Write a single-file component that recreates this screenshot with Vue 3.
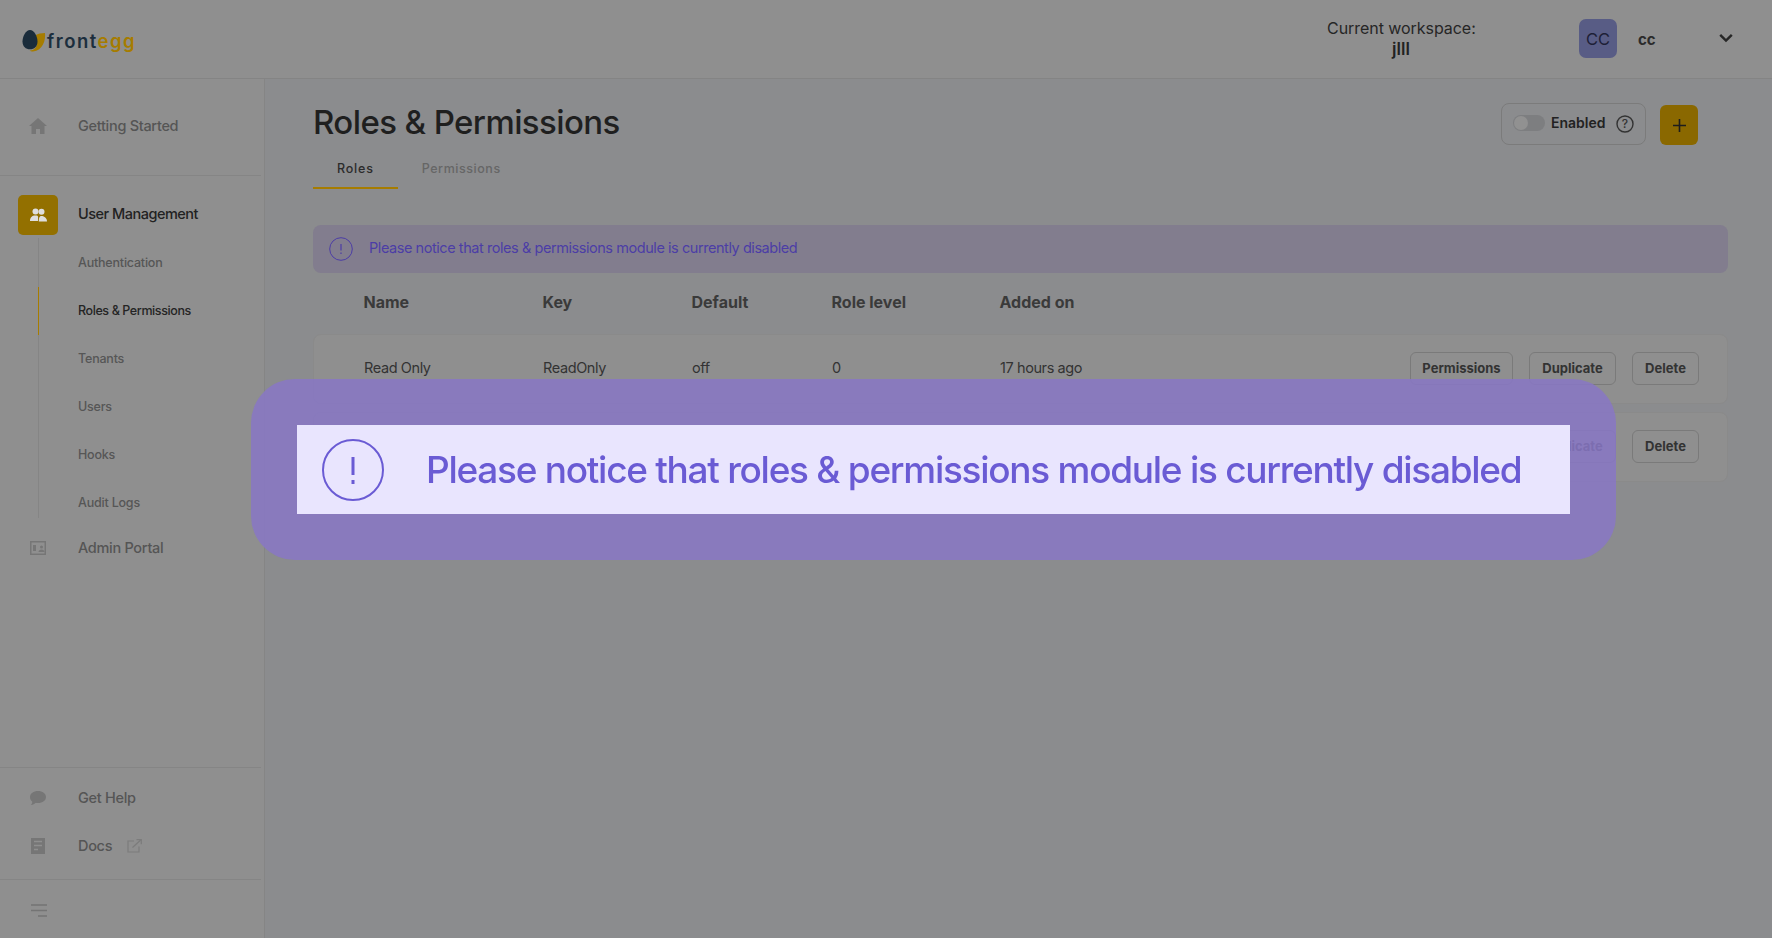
<script setup>
const subItems = [
  { label: 'Authentication' },
  { label: 'Roles & Permissions', active: true },
  { label: 'Tenants' },
  { label: 'Users' },
  { label: 'Hooks' },
  { label: 'Audit Logs' },
]
const columns = ['Name', 'Key', 'Default', 'Role level', 'Added on']
const rows = [
  { id: 'read-only', cells: ['Read Only', 'ReadOnly', 'off', '0', '17 hours ago'] },
  { id: 'covered', cells: [] },
]
const notice = 'Please notice that roles & permissions module is currently disabled'
</script>

<template>
  <div class="page">
    <header class="topbar">
      <div class="logo">
        <svg class="egg" width="24" height="22" viewBox="0 0 24 22">
          <path d="M13 5.500c3.500-2 6-2.200 10-2.500c.8 7-2 17.500-12 18.500c-1.500 0-3-.5-3.500-1c5 .2 9-4 7-12z" fill="#a67c00" />
          <path d="M8 0c4 0 7.500 6 7.500 11.500c0 5-3.300 7.800-7.500 7.800S.5 16.500.5 11.500C.5 6 4 0 8 0z" fill="#1a2c3b" />
        </svg>
        <span class="logo-text">front<span class="logo-accent">egg</span></span>
      </div>
      <div class="workspace">
        <div class="workspace-label">Current workspace:</div>
        <div class="workspace-name">jlll</div>
      </div>
      <div class="avatar">CC</div>
      <div class="user-name">cc</div>
      <svg class="chevron" width="14" height="10" viewBox="0 0 14 10">
        <path d="M1.200 1.800L7 7.600l5.800-5.800" fill="none" stroke="#262626" stroke-width="2.400" />
      </svg>
    </header>

    <div class="body">
      <aside class="sidebar">
        <div class="section-top">
          <a class="nav-item">
            <span class="nav-icon">
              <svg width="18" height="16" viewBox="0 0 18 16"><path d="M9 0L0 8h2.500v8h4.500v-5h4v5h4.500V8H18z" fill="#767676" /></svg>
            </span>
            <span class="nav-label">Getting Started</span>
          </a>
        </div>

        <div class="section-main">
          <a class="nav-item current">
            <span class="nav-icon boxed">
              <svg width="17" height="14" viewBox="0 0 17 14">
                <circle cx="5.500" cy="3.500" r="3" fill="#dedede" />
                <path d="M0 13c0-3.500 2-5.500 5.500-5.500S8 9 8 13z" fill="#dedede" />
                <circle cx="11.500" cy="3.800" r="3" fill="#dedede" />
                <path d="M8.800 13.500c0-4 .8-5.500 2.700-5.500S17 9.500 17 13.500z" fill="#dedede" />
              </svg>
            </span>
            <span class="nav-label">User Management</span>
          </a>
          <div class="sub-list">
            <a v-for="item in subItems" :key="item.label" class="sub-item" :class="{ active: item.active }">{{ item.label }}</a>
          </div>
          <a class="nav-item portal">
            <span class="nav-icon">
              <svg width="16" height="14" viewBox="0 0 16 14">
                <rect x="0.750" y="0.750" width="14.500" height="12.500" fill="none" stroke="#767676" stroke-width="1.500" />
                <rect x="3" y="4" width="3" height="6" fill="#767676" />
                <circle cx="11.500" cy="6" r="1.500" fill="#767676" />
                <path d="M8.500 11c0-1.500 1.500-2.500 3-2.500s3 1 3 2.500z" fill="#767676" />
              </svg>
            </span>
            <span class="nav-label">Admin Portal</span>
          </a>
        </div>

        <div class="section-bottom">
          <a class="nav-item">
            <span class="nav-icon">
              <svg width="16" height="14" viewBox="0 0 16 14"><path d="M8 0c4.400 0 8 2.500 8 6s-3.600 6-8 6c-.8 0-1.500 0-2.200-.2C4.700 13 3 14 .8 14c1-1 1.500-2 1.500-3.200C.9 9.700 0 8 0 6c0-3.500 3.600-6 8-6z" fill="#767676" /></svg>
            </span>
            <span class="nav-label">Get Help</span>
          </a>
          <a class="nav-item">
            <span class="nav-icon">
              <svg width="14" height="16" viewBox="0 0 14 16">
                <path d="M0 0h14v16H0z" fill="#767676" />
                <path d="M3 3.500h8M3 7.500h8M3 11.500h4" stroke="#8f8f8f" stroke-width="1.600" />
              </svg>
            </span>
            <span class="nav-label">Docs</span>
            <svg class="external" width="15" height="14" viewBox="0 0 15 14">
              <path d="M7 2H1v11h11V7.500" fill="none" stroke="#7c7c7c" stroke-width="1.200" />
              <path d="M5.500 8.500L14 .8M9.500.7h4.800v4.500" fill="none" stroke="#7c7c7c" stroke-width="1.200" />
            </svg>
          </a>
        </div>

        <div class="section-foot">
          <svg width="16" height="13" viewBox="0 0 16 13">
            <path d="M0 1h16M0 6.500h16M7 12h9" stroke="#747474" stroke-width="1.500" />
          </svg>
        </div>
      </aside>

      <main class="main">
        <div class="title-row">
          <h1 class="title">Roles &amp; Permissions</h1>
          <div class="controls">
            <div class="enable-box">
              <span class="toggle"><span class="knob"></span></span>
              <span class="enable-label">Enabled</span>
              <svg width="18" height="18" viewBox="0 0 18 18">
                <circle cx="9" cy="9" r="8" fill="none" stroke="#333" stroke-width="1.400" />
                <text x="9" y="13" text-anchor="middle" class="help-mark">?</text>
              </svg>
            </div>
            <button class="add-btn">
              <svg width="13" height="13" viewBox="0 0 13 13"><path d="M6.500 0v13M0 6.500h13" stroke="#1d1d1d" stroke-width="1.600" /></svg>
            </button>
          </div>
        </div>

        <nav class="tabs">
          <a class="tab selected">Roles</a>
          <a class="tab">Permissions</a>
        </nav>

        <div class="alert">
          <svg width="24" height="24" viewBox="0 0 24 24">
            <circle cx="12" cy="12" r="11.300" fill="none" stroke="#4c3da6" stroke-width="1" />
            <path d="M12 7v6.500M12 15.500v1.500" stroke="#4c3da6" stroke-width="1.200" />
          </svg>
          <span class="alert-text">{{ notice }}</span>
        </div>

        <div class="table-row table-head">
          <span v-for="col in columns" :key="col" class="cell">{{ col }}</span>
        </div>
        <div class="rows">
          <div v-for="row in rows" :key="row.id" class="table-row card">
            <span v-for="value in row.cells" :key="value" class="cell">{{ value }}</span>
            <div class="actions">
              <button class="act perm" :class="{ covered: row.id === 'covered' }">Permissions</button>
              <button class="act dup">Duplicate</button>
              <button class="act del">Delete</button>
            </div>
          </div>
        </div>
      </main>
    </div>

    <div class="spotlight">
      <div class="spotlight-inner">
        <svg class="big-icon" width="62" height="62" viewBox="0 0 62 62">
          <circle cx="31" cy="31" r="30" fill="none" stroke="#6a5bd4" stroke-width="2" />
          <path d="M31 18v18M31 41v4" stroke="#6a5bd4" stroke-width="3" />
        </svg>
        <span class="big-text">{{ notice }}</span>
      </div>
    </div>
  </div>
</template>

<style scoped>
.page {
  position: relative;
  display: flex;
  flex-direction: column;
  height: 938px;
  overflow: hidden;
  background: #8b8c8e;
  font-family: Inter, "Noto Sans", sans-serif;
  color: #222;
}
.topbar {
  display: flex;
  align-items: center;
  height: 78px;
  flex: none;
  padding: 0 39px 0 22px;
  background: #8f8f8f;
  border-bottom: 1px solid #848484;
}
.logo {
  display: flex;
  align-items: center;
  gap: 1px;
  margin-top: 3px;
}
.logo-text {
  font-size: 18.500px;
  font-weight: 600;
  letter-spacing: 1.500px;
  color: #1c2e3d;
  line-height: 22px;
}
.logo-accent {
  color: #a67c00;
}
.workspace {
  margin-left: auto;
  width: 148px;
  text-align: center;
  margin-top: -3px;
}
.workspace-label {
  font-size: 16px;
  line-height: 22px;
  color: #262626;
  white-space: nowrap;
  letter-spacing: -0.05px;
}
.workspace-name {
  font-size: 17px;
  font-weight: 600;
  line-height: 20px;
  color: #222;
}
.avatar {
  display: flex;
  align-items: center;
  justify-content: center;
  width: 38px;
  height: 39px;
  margin-left: 104px;
  margin-top: -1px;
  border-radius: 7px;
  background: #585c85;
  font-size: 16.500px;
  color: #1d2036;
}
.user-name {
  width: 81px;
  margin-left: 21px;
  font-size: 15px;
  font-weight: 700;
  color: #2b2b2b;
  margin-top: 1px;
}
.chevron {
  margin-top: -2px;
}

.body {
  display: flex;
  flex: 1;
  min-height: 0;
}
.sidebar {
  display: flex;
  flex-direction: column;
  width: 265px;
  flex: none;
  background: #8f8f8f;
  border-right: 1px solid #858585;
  box-sizing: border-box;
}
.section-top {
  display: flex;
  align-items: center;
  height: 94px;
  padding-bottom: 2px;
  margin-right: 3px;
  border-bottom: 1px solid #858585;
  box-sizing: content-box;
}
.nav-item {
  display: flex;
  align-items: center;
  height: 48px;
  padding-left: 18px;
  gap: 20px;
  color: #555;
  font-size: 14.500px;
  font-weight: 500;
  letter-spacing: -0.3px;
  white-space: nowrap;
}
.nav-label {
  padding-bottom: 2px;
}
.nav-icon {
  display: flex;
  align-items: center;
  justify-content: center;
  width: 40px;
  height: 40px;
  flex: none;
}
.boxed {
  background: #937000;
  border-radius: 5px;
}
.current {
  color: #222;
  letter-spacing: -0.5px;
}
.current .nav-label {
  padding-bottom: 4px;
}
.section-main {
  padding-top: 19px;
  display: flex;
  flex-direction: column;
}
.section-main .current {
  height: 40px;
  margin-bottom: 3px;
}
.sub-list {
  position: relative;
  margin-left: 38px;
  padding-left: 40px;
}
.sub-list::before {
  content: "";
  position: absolute;
  left: 0;
  top: 0;
  bottom: 8px;
  width: 1px;
  background: #858585;
}
.sub-item {
  position: relative;
  display: flex;
  align-items: center;
  height: 48px;
  font-size: 12.500px;
  font-weight: 500;
  color: #565656;
  letter-spacing: -0.2px;
}
.sub-item.active {
  color: #242424;
  letter-spacing: -0.4px;
}
.sub-item.active::before {
  content: "";
  position: absolute;
  left: -40px;
  top: 1px;
  bottom: -1px;
  width: 1px;
  background: #a67c00;
}
.portal {
  margin-top: -2px;
}
.section-bottom {
  margin-top: auto;
  margin-right: 3px;
  padding: 6px 0 9px;
  border-top: 1px solid #858585;
  border-bottom: 1px solid #858585;
}
.external {
  margin-left: -5px;
}
.section-foot {
  display: flex;
  align-items: center;
  height: 55px;
  padding: 3px 0 0 31px;
}

.main {
  flex: 1;
  min-width: 0;
  padding: 21px 44px 0 48px;
}
.title-row {
  display: flex;
  align-items: flex-start;
  justify-content: space-between;
}
.title {
  margin: 0;
  font-size: 33px;
  font-weight: 500;
  line-height: 44px;
  letter-spacing: -0.6px;
  color: #1f1f1f;
}
.controls {
  display: flex;
  align-items: flex-end;
  gap: 14px;
  margin: 3px 30px 0 0;
}
.enable-box {
  display: flex;
  align-items: center;
  box-sizing: border-box;
  width: 145px;
  height: 42px;
  padding: 0 11px;
  border: 1px solid #7b7b7b;
  border-radius: 8px;
  gap: 6px;
}
.toggle {
  display: block;
  width: 32px;
  height: 16px;
  margin-top: -2px;
  border-radius: 8px;
  background: #7d7e80;
  flex: none;
}
.knob {
  display: block;
  width: 14px;
  height: 14px;
  margin: 1px;
  border-radius: 50%;
  background: #919191;
}
.enable-label {
  font-size: 14px;
  font-weight: 600;
  color: #222;
  margin-right: 4px;
  padding-bottom: 3px;
}
.help-mark {
  font-size: 12px;
  font-weight: 500;
  fill: #333;
  font-family: Inter, sans-serif;
}
.add-btn {
  display: flex;
  align-items: center;
  justify-content: center;
  width: 38px;
  height: 40px;
  padding: 0;
  border: 0;
  border-radius: 6px;
  background: #8a6800;
}
.tabs {
  display: flex;
  margin-top: 16px;
  height: 28px;
}
.tab {
  box-sizing: border-box;
  height: 28px;
  padding: 0 24px;
  font-size: 12.500px;
  font-weight: 500;
  line-height: 16px;
  letter-spacing: 0.55px;
  color: #666;
}
.tab.selected {
  color: #2b2b2b;
  border-bottom: 2px solid #a67c00;
  letter-spacing: 0.8px;
}
.alert {
  display: flex;
  align-items: center;
  gap: 16px;
  height: 48px;
  margin-top: 36px;
  padding-left: 16px;
  border-radius: 8px;
  background: #827d8e;
  color: #4c3da6;
  font-size: 14.500px;
  letter-spacing: -0.44px;
}
.alert-text {
  padding-bottom: 3px;
}
.table-row {
  display: flex;
  align-items: center;
  padding-left: 50px;
}
.cell {
  flex: none;
  font-size: 14.500px;
  color: #333;
  letter-spacing: -0.4px;
  white-space: nowrap;
}
.cell:nth-child(1) { width: 179px; }
.cell:nth-child(2) { width: 149px; }
.cell:nth-child(3) { width: 140px; }
.cell:nth-child(4) { width: 168px; }
.table-head {
  height: 20px;
  margin-top: 20px;
  margin-bottom: 21px;
  padding-left: 50.500px;
}
.table-head .cell {
  font-size: 16px;
  font-weight: 700;
  color: #3a3a3a;
  letter-spacing: 0;
  padding-bottom: 2px;
}
.rows {
  display: flex;
  flex-direction: column;
  gap: 8px;
}
.card {
  height: 70px;
  box-sizing: border-box;
  background: #8f8f8f;
  border: 1px solid #8a8a8a;
  border-radius: 8px;
}
.card .cell {
  padding-bottom: 4px;
}
.actions {
  display: flex;
  gap: 16px;
  margin: -1px 28px 0 auto;
}
.act {
  height: 33px;
  padding: 0 0 2px;
  box-sizing: border-box;
  background: transparent;
  border: 1px solid #7a7a7a;
  border-radius: 6px;
  font-family: Inter, sans-serif;
  font-size: 13px;
  font-weight: 700;
  color: #333;
}
.perm { width: 103px; }
.covered { visibility: hidden; }
.dup { width: 87px; }
.del { width: 67px; }

.spotlight {
  position: absolute;
  left: 251px;
  top: 379px;
  display: flex;
  box-sizing: border-box;
  width: 1365px;
  height: 181px;
  padding: 46px;
  border-radius: 44px;
  background: rgba(136, 119, 197, 0.86);
}
.spotlight-inner {
  display: flex;
  align-items: center;
  flex: 1;
  padding-left: 25px;
  gap: 42px;
  background: #e9e5fe;
  overflow: hidden;
}
.big-icon {
  flex: none;
  filter: blur(0.4px);
}
.big-text {
  font-size: 37px;
  font-weight: 500;
  color: #6a5bd4;
  letter-spacing: -1.280px;
  white-space: nowrap;
  filter: blur(0.5px);
}
</style>
